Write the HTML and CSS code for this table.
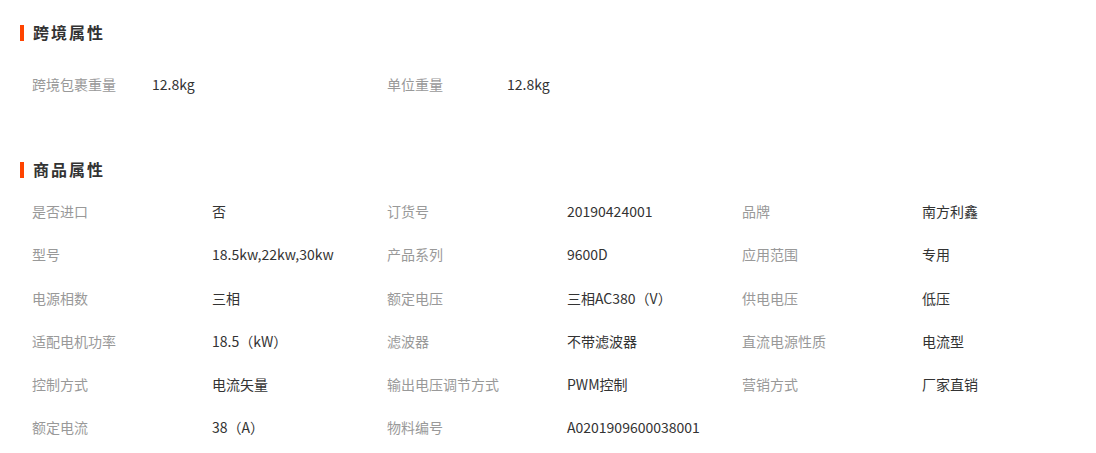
FILE: index.html
```html
<!DOCTYPE html>
<html>
<head>
  <meta charset="utf-8">
  <title>商品属性</title>
  <link rel="stylesheet" href="styles.css">
</head>
<body>
  <div class="attr-wrap">
    <div class="attr-section cross">
      <h3 class="attr-title">跨境属性</h3>
      <div class="attr-grid cross-grid">
        <span class="attr-name">跨境包裹重量</span><span class="attr-value">12.8kg</span>
        <span class="attr-name">单位重量</span><span class="attr-value">12.8kg</span>
      </div>
    </div>

    <div class="attr-section goods">
      <h3 class="attr-title">商品属性</h3>
      <div class="attr-grid goods-grid">
        <span class="attr-name">是否进口</span><span class="attr-value">否</span>
        <span class="attr-name">订货号</span><span class="attr-value">20190424001</span>
        <span class="attr-name">品牌</span><span class="attr-value">南方利鑫</span>

        <span class="attr-name">型号</span><span class="attr-value">18.5kw,22kw,30kw</span>
        <span class="attr-name">产品系列</span><span class="attr-value">9600D</span>
        <span class="attr-name">应用范围</span><span class="attr-value">专用</span>

        <span class="attr-name">电源相数</span><span class="attr-value">三相</span>
        <span class="attr-name">额定电压</span><span class="attr-value">三相AC380（V）</span>
        <span class="attr-name">供电电压</span><span class="attr-value">低压</span>

        <span class="attr-name">适配电机功率</span><span class="attr-value">18.5（kW）</span>
        <span class="attr-name">滤波器</span><span class="attr-value">不带滤波器</span>
        <span class="attr-name">直流电源性质</span><span class="attr-value">电流型</span>

        <span class="attr-name">控制方式</span><span class="attr-value">电流矢量</span>
        <span class="attr-name">输出电压调节方式</span><span class="attr-value">PWM控制</span>
        <span class="attr-name">营销方式</span><span class="attr-value">厂家直销</span>

        <span class="attr-name">额定电流</span><span class="attr-value">38（A）</span>
        <span class="attr-name">物料编号</span><span class="attr-value">A0201909600038001</span>
      </div>
    </div>
  </div>
</body>
</html>
```

FILE: styles.css
```css
body {
  margin: 0;
  padding: 0;
  background-color: #fff;
  font-family: "Microsoft YaHei", "Noto Sans CJK SC", "Noto Sans", sans-serif;
  font-size: 14px;
  color: #333;
}

.attr-wrap {
  padding: 20px 0 0 20px;
}

.attr-title {
  margin: 0;
  height: 24px;
  line-height: 24px;
  padding-left: 13px;
  font-size: 16px;
  font-weight: bold;
  letter-spacing: 2px;
  color: #333;
  position: relative;
}
/* orange marker */
.attr-title::before {
  content: "";
  position: absolute;
  left: 0;
  top: 5px;
  width: 4px;
  height: 16px;
  background-color: #ff4400;
}

.attr-grid {
  display: grid;
  padding-left: 12px;
}

.attr-grid span {
  height: 43.2px;
  line-height: 43.2px;
  white-space: nowrap;
}

.attr-name {
  color: #999;
}
.attr-value {
  color: #333;
}

.cross-grid {
  grid-template-columns: 120px 235px 120px 235px;
  margin-top: 19px;
}

.goods {
  margin-top: 51px;
}
.goods-grid {
  grid-template-columns: 180px 175px 180px 175px 180px 175px;
  margin-top: 9px;
}
```
